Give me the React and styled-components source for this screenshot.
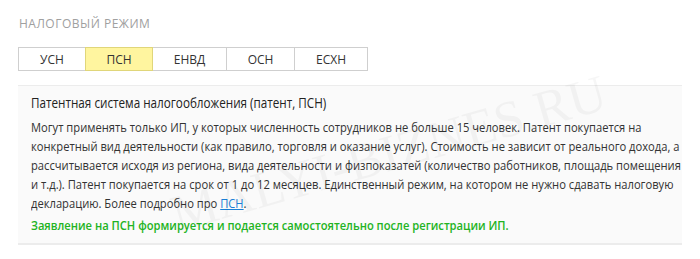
import styled, { createGlobalStyle } from 'styled-components'

const Global = createGlobalStyle`
	body { margin: 0; background: #fff; font-family: "Open Sans", "Liberation Sans", sans-serif; }
`

const Page = styled.div`
	position: relative;
	padding: 16px 18px 0 18px;
	width: 664px;
`

const Heading = styled.div`
	font-size: 12px;
	letter-spacing: 0.5px;
	color: #a0a0a0;
	line-height: 16px;
	padding-left: 1px;
`

const Tabs = styled.div`
	display: flex;
	margin-top: 15px;
`

const Tab = styled.div`
	width: ${p => p.w}px;
	height: 24px;
	box-sizing: border-box;
	border: 1px solid #cfcfcf;
	margin-left: -1px;
	&:first-child { margin-left: 0; }
	display: flex;
	align-items: center;
	justify-content: center;
	font-size: 12px;
	color: #333;
	background: ${p => (p.active ? '#fff59f' : '#fff')};
	position: relative;
	z-index: ${p => (p.active ? 1 : 0)};
	${p => p.active && 'border-color: #e0d67a;'}
`

const Box = styled.div`
	margin-top: 14px;
	background: #fafafa;
	border-top: 1px solid #ececec;
	border-bottom: 2px solid #ececec;
	padding: 7px 12px 8px 13px;
`

// the source renders its copy slightly squeezed
const Content = styled.div`
	transform: scaleX(0.86);
	transform-origin: left top;
	white-space: nowrap;
`

const Title = styled.div`
	font-size: 13.6px;
	color: #222;
	line-height: 20px;
	margin-bottom: 5px;
`

const Text = styled.p`
	margin: 0;
	font-size: 13px;
	line-height: 19px;
	color: #333;
`

const Link = styled.a`
	color: #1a7fd6;
	text-decoration: underline;
`

const Note = styled.p`
	margin: 3px 0 0;
	font-size: 13px;
	line-height: 19px;
	color: #22b322;
	font-weight: 600;
`

const Watermark = styled.div`
	position: absolute;
	left: 178px;
	top: 189px;
	font-family: "Liberation Serif", serif;
	font-size: 52px;
	line-height: 1;
	color: rgba(0, 0, 0, 0.035);
	transform: rotate(-16deg);
	transform-origin: 0 46px;
	white-space: nowrap;
	pointer-events: none;
`

const tabs = [
	{ label: 'УСН', w: 68 },
	{ label: 'ПСН', w: 68, active: true },
	{ label: 'ЕНВД', w: 75 },
	{ label: 'ОСН', w: 69 },
	{ label: 'ЕСХН', w: 74 },
]

const App = () => (
	<Page>
		<Global />
		<Heading>НАЛОГОВЫЙ РЕЖИМ</Heading>
		<Tabs>
			{tabs.map(t => (
				<Tab key={t.label} w={t.w} active={t.active}>{t.label}</Tab>
			))}
		</Tabs>
		<Box>
			<Content>
				<Title>Патентная система налогообложения (патент, ПСН)</Title>
				<Text>
					Могут применять только ИП, у которых численность сотрудников не больше 15 человек. Патент покупается на<br />
					конкретный вид деятельности (как правило, торговля и оказание услуг). Стоимость не зависит от реального дохода, а<br />
					рассчитывается исходя из региона, вида деятельности и физпоказатей (количество работников, площадь помещения<br />
					и т.д.). Патент покупается на срок от 1 до 12 месяцев. Единственный режим, на котором не нужно сдавать налоговую<br />
					декларацию. Более подробно про <Link href="#">ПСН</Link>.
				</Text>
				<Note>Заявление на ПСН формируется и подается самостоятельно после регистрации ИП.</Note>
			</Content>
		</Box>
		<Watermark>MALYI-BIZNES.RU</Watermark>
	</Page>
)

export default App
